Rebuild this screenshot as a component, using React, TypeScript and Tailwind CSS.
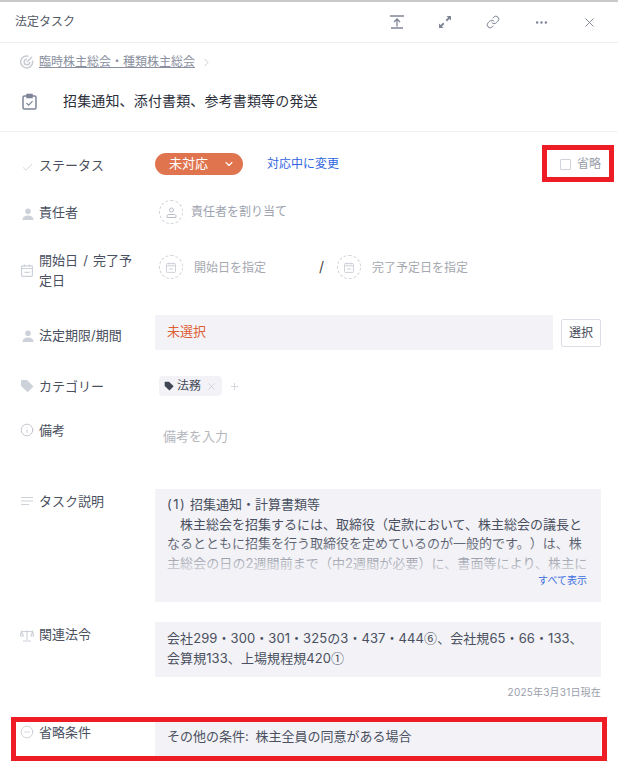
import React from 'react'
import { Check, ChevronDown, ChevronRight, Ellipsis, Info, Link, MinusCircle, Plus, X } from 'lucide-react'

const PersonIcon = () => (
  <svg width="12" height="12" viewBox="0 0 12 12" fill="#cdd1da" className="ml-[2px]">
    <circle cx="6" cy="3.200" r="2.800" />
    <path d="M0.500 12c0-2.800 2.200-4.400 5.500-4.400s5.500 1.600 5.500 4.400z" />
  </svg>
)

const CalendarIcon = ({ color = '#cdd1da', size = 12 }: { color?: string; size?: number }) => (
  <svg width={size} height={size + 1} viewBox="0 0 12 13" fill="none" stroke={color} strokeWidth="1.200">
    <rect x="0.600" y="1.800" width="10.800" height="10.600" rx="0.800" />
    <path d="M0.600 4.500h10.800M3.500 0.500v2.500M8.500 0.500v2.500M3.500 8.300h5" />
  </svg>
)

const TagIcon = ({ color, size }: { color: string; size: number }) => (
  <svg width={size} height={size} viewBox="0 0 14 14" fill={color}>
    <path d="M1 1.500c0-.3.200-.5.500-.5H7l6.500 6.500-5.800 5.800L1 7z" />
  </svg>
)

const Row = ({ icon, label, className, children }: { icon: React.ReactNode; label: React.ReactNode; className?: string; children: React.ReactNode }) => (
  <div className={`flex pr-[17px] ${className ?? ''}`}>
    <div className="w-[155px] shrink-0 flex pl-5 text-[13px] leading-5 text-[#4a5060]">
      <span className="w-[19px] shrink-0 flex items-center self-start h-5">{icon}</span>
      <span className="w-[96px]">{label}</span>
    </div>
    <div className="flex-1 min-w-0">{children}</div>
  </div>
)

const DashedCircle = ({ children }: { children: React.ReactNode }) => (
  <span className="w-6 h-6 rounded-full border border-dashed border-[#cfd2d8] flex items-center justify-center shrink-0">{children}</span>
)

const App: React.FC = () => {
  return (
    <div className="relative w-[618px] h-[769px] overflow-hidden bg-white font-['Inter','Noto_Sans_CJK_JP',sans-serif] [text-spacing-trim:space-all]">
      <div className="h-[2px] bg-[#c9c9c9]" />

      <header className="h-[41px] border-b border-[#eeeff2] flex items-center pl-[15px] text-xs text-[#555b68]">
        <span className="flex-1">法定タスク</span>
        <div className="flex items-center text-[#808696]">
          <span className="w-12 flex justify-center">
            <svg width="14" height="14" viewBox="0 0 14 14" fill="none" stroke="currentColor" strokeWidth="1.300">
              <path d="M0 1h14M1 13h12M7 11.500V4M4 7l3-3 3 3" />
            </svg>
          </span>
          <span className="w-12 flex justify-center">
            <svg width="14" height="14" viewBox="0 0 14 14" fill="currentColor">
              <path d="M8.500 1H13v4.500l-1.600-1.600-2.500 2.500-1.300-1.300 2.500-2.500zM5.500 13H1V8.500l1.600 1.600 2.500-2.500 1.300 1.300-2.500 2.500z" />
            </svg>
          </span>
          <span className="w-12 flex justify-center"><Link size={14} strokeWidth={1.700} /></span>
          <span className="w-12 flex justify-center"><Ellipsis size={15} strokeWidth={2} /></span>
          <span className="w-12 flex justify-center mr-[5px]"><X size={15} strokeWidth={1.500} /></span>
        </div>
      </header>

      <div className="h-[89px] pt-[11px] border-b border-[#f1f2f4]">
        <div className="flex items-center h-4 pl-5 text-xs text-[#8a90a0]">
          <svg width="14" height="14" viewBox="0 0 14 14" fill="none" stroke="#c9ccd3" strokeWidth="1.500" className="mr-[5px]">
            <path d="M12.500 5.500A6 6 0 1 1 8.500 1.200M9.800 7a2.800 2.800 0 1 1-2.800-2.800M7 7l5-5" />
          </svg>
          <span className="underline">臨時株主総会・種類株主総会</span>
          <ChevronRight size={13} strokeWidth={1.200} className="ml-[5px] text-[#b4b8c2]" />
        </div>
        <div className="flex items-center mt-[21px] pl-[22px] text-sm tracking-[0.15px] text-[#2c303a]">
          <svg width="15" height="17" viewBox="0 0 15 17" fill="none" stroke="#7d8596" strokeWidth="1.500" className="mr-[26px]">
            <rect x="1" y="3" width="13" height="13" rx="1.500" />
            <path d="M5 1.500h5v3H5z" fill="#7d8596" />
            <path d="m4.500 10 2.200 2.200 3.800-4" strokeWidth="1.200" />
          </svg>
          <span>招集通知、添付書類、参考書類等の発送</span>
        </div>
      </div>

      <Row className="mt-[23px]" icon={<Check size={13} strokeWidth={1.300} className="text-[#c5c8d0] ml-[1px] mt-[4px]" />} label="ステータス">
        <div className="flex items-center h-[22px] -mt-[2px]">
          <button className="w-[88px] h-[22px] rounded-full bg-[#df744f] text-white text-[13px] flex items-center pl-[14px]">
            未対応
            <ChevronDown size={12} strokeWidth={2.200} className="ml-[15px]" />
          </button>
          <span className="ml-6 text-xs text-[#2f65e0]">対応中に変更</span>
          <label className="ml-auto flex items-center text-xs text-[#9a9eaa]">
            <span className="w-[11px] h-[11px] border border-[#cfd3da] rounded-[1px] mr-[6px]" />
            省略
          </label>
        </div>
      </Row>

      <Row className="mt-[27px]" icon={<span className="mt-[4px]"><PersonIcon /></span>} label="責任者">
        <div className="flex items-center pl-1 -mt-[2px] text-xs text-[#9ea3af]">
          <DashedCircle>
            <svg width="11" height="11" viewBox="0 0 11 11" fill="none" stroke="#b9bdc6">
              <circle cx="5.500" cy="3" r="2" />
              <path d="M1 10.500V9c0-1 1-1.500 2-1.500h5c1 0 2 .5 2 1.500v1.500z" />
            </svg>
          </DashedCircle>
          <span className="ml-2">責任者を割り当て</span>
        </div>
      </Row>

      <Row className="mt-[26px]" icon={<span className="mt-[20px] ml-[1px]"><CalendarIcon /></span>} label={<span className="[word-spacing:1.500px]">開始日 / 完了予定日</span>}>
        <div className="flex items-center pl-1 mt-[5px] text-xs text-[#a5a8b0]">
          <DashedCircle><CalendarIcon color="#cfd2d8" size={10} /></DashedCircle>
          <span className="ml-[11px] w-[115px] mt-[1px]">開始日を指定</span>
          <span className="text-sm text-[#444] w-[28px] pl-[10px]">/</span>
          <DashedCircle><CalendarIcon color="#cfd2d8" size={10} /></DashedCircle>
          <span className="ml-[11px] mt-[1px]">完了予定日を指定</span>
        </div>
      </Row>

      <Row className="mt-[25px]" icon={<span className="mt-[22px]"><PersonIcon /></span>} label={<span className="block pt-[10px] whitespace-nowrap">法定期限/期間</span>}>
        <div className="flex items-center gap-2">
          <div className="flex-1 h-[35px] bg-[#f2f2f7] pl-3 pb-[1px] flex items-center text-[13px] text-[#df5f35]">未選択</div>
          <button className="w-10 h-7 border border-[#dcdee5] rounded-[2px] bg-white text-xs text-[#444a58]">選択</button>
        </div>
      </Row>

      <Row className="mt-[26px]" icon={<TagIcon color="#cdd1da" size={14} />} label="カテゴリー">
        <div className="flex items-center pl-1">
          <span className="h-5 w-[63px] rounded-[4px] bg-[#f2f2f7] flex items-center pl-[5px] text-xs text-[#444a58]">
            <TagIcon color="#3f4552" size={10} />
            <span className="ml-[3px]">法務</span>
            <X size={11} strokeWidth={1.200} className="ml-[5px] text-[#b8bcc5]" />
          </span>
          <Plus size={11} strokeWidth={1.500} className="ml-[7px] text-[#c5c8d0]" />
        </div>
      </Row>

      <Row className="mt-[24px]" icon={<Info size={14} strokeWidth={1.300} className="text-[#b4b8c2]" />} label="備考">
        <div className="pl-2 pt-[6px] text-[13px] leading-5 text-[#b4b6bc]">備考を入力</div>
      </Row>

      <Row className="mt-[43px]" icon={
        <svg width="14" height="10" viewBox="0 0 14 10" fill="none" stroke="#cdd1da" strokeWidth="1.200" className="mt-[4px]">
          <path d="M1 1.500h12M1 5h12M1 8.500h8" />
        </svg>
      } label={<span className="block pt-[2px]">タスク説明</span>}>
        <div className="relative h-[113px] bg-[#f2f2f7] px-3 pt-[6px] text-[13px] text-[#4a5060] leading-[19.700px] whitespace-nowrap">
          <div><span className="tracking-[1.500px]">(1)</span> 招集通知・計算書類等</div>
          <div>　株主総会を招集するには、取締役（定款において、株主総会の議長と</div>
          <div>なるとともに招集を行う取締役を定めているのが一般的です。）は、株</div>
          <div className="tracking-[0.08px]">主総会の日の2週間前まで（中2週間が必要）に、書面等により、株主に</div>
          <div className="absolute left-0 right-0 top-[48px] h-[36px] bg-gradient-to-b from-[#f2f2f7]/0 to-[#f2f2f7]/85" />
          <span className="absolute right-[14px] top-[84px] text-[10px] leading-[14px] text-[#3b6fe0]">すべて表示</span>
        </div>
      </Row>

      <Row className="mt-[20px]" icon={
        <svg width="14" height="13" viewBox="0 0 14 13" fill="none" stroke="#cdd1da" strokeWidth="1.100" className="mt-[6px]">
          <path d="M7 1v10M1.500 2.500h11M1.500 2.500 0 7h3.500zM12.500 2.500 11 7h3zM3 12h8" />
        </svg>
      } label={<span className="block pt-[2px]">関連法令</span>}>
        <div className="h-[55px] bg-[#f2f2f7] px-3 pt-[6px] text-[13px] leading-5 text-[#4a5060] whitespace-nowrap">
          <div className="tracking-[0.08px]">会社299・300・301・325の3・437・444<span className="font-['Noto_Sans_CJK_JP',sans-serif]">⑥</span>、会社規65・66・133、</div>
          <div className="tracking-[0.08px]">会算規133、上場規程規420<span className="font-['Noto_Sans_CJK_JP',sans-serif]">①</span></div>
        </div>
        <div className="mt-2 text-right text-[10px] leading-[14px] tracking-[0.2px] text-[#9a9eaa]">2025年3月31日現在</div>
      </Row>

      <Row className="mt-[23px]" icon={<MinusCircle size={14} strokeWidth={1.300} className="text-[#c5c8d0]" />} label="省略条件">
        <div className="h-[34px] bg-[#f2f2f7] pl-3 pt-1 leading-5 text-[13px] text-[#4a5060] [word-spacing:3px]">その他の条件: 株主全員の同意がある場合</div>
      </Row>

      {/* red annotation boxes sit on top of the page */}
      <div className="absolute left-[542px] top-[145px] w-[72px] h-[37px] border-[5px] border-[#ee1c25]" />
      <div className="absolute left-[11px] top-[717px] w-[596px] h-[44px] border-[5px] border-[#ee1c25]" />
    </div>
  )
}

export default App
